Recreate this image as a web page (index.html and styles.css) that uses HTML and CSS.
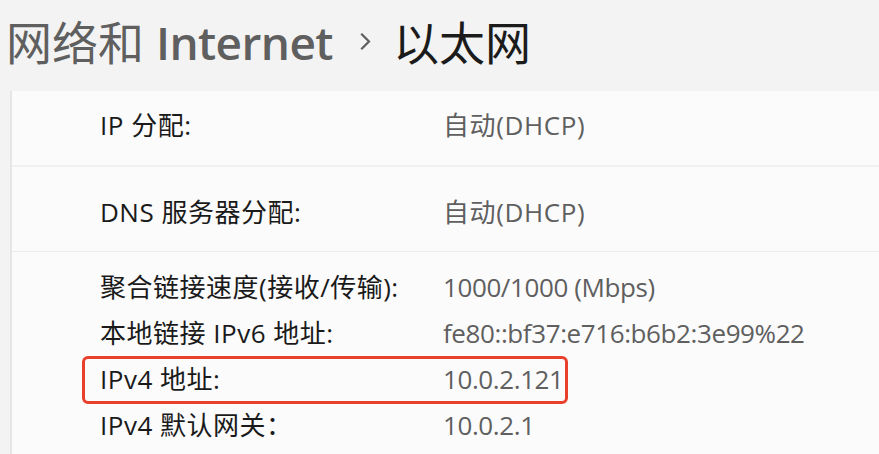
FILE: index.html
```html
<!DOCTYPE html>
<html lang="zh-CN">
<head>
<meta charset="utf-8">
<title>以太网</title>
<link rel="stylesheet" href="styles.css">
</head>
<body>
<header class="crumbs">
  <span class="crumb-parent"><span class="cjk">网络和</span> <span class="latin-strong">Internet</span></span>
  <svg class="chev" width="12" height="18" viewBox="0 0 12 18" aria-hidden="true"><polyline points="2,1.5 9,8.5 2,15.5" fill="none" stroke="#5f5f5f" stroke-width="2.2" stroke-linecap="square" stroke-linejoin="miter"/></svg>
  <span class="crumb-current">以太网</span>
</header>
<main class="card">
  <section class="group g1">
    <div class="row"><span class="label">IP 分配:</span><span class="value wide">自动(DHCP)</span></div>
  </section>
  <section class="group g2">
    <div class="row"><span class="label">DNS 服务器分配:</span><span class="value wide">自动(DHCP)</span></div>
  </section>
  <section class="group g3">
    <div class="row"><span class="label">聚合链接速度(接收/传输):</span><span class="value">1000/1000 (Mbps)</span></div>
    <div class="row"><span class="label">本地链接 IPv6 地址:</span><span class="value">fe80::bf37:e716:b6b2:3e99%22</span></div>
    <div class="row marked"><span class="label">IPv4 地址:</span><span class="value">10.0.2.121</span><span class="highlight"></span></div>
    <div class="row"><span class="label">IPv4 默认网关：</span><span class="value">10.0.2.1</span></div>
  </section>
</main>
</body>
</html>
```

FILE: styles.css
```css
html, body {
  margin: 0;
  padding: 0;
  background: #f3f3f3;
  overflow: hidden;
  height: 454px;
}
body {
  font-family: "Open Sans", "Noto Sans CJK SC", sans-serif;
}
.crumbs {
  display: flex;
  align-items: center;
  height: 91px;
  box-sizing: border-box;
  padding: 0 0 8px 6px;
  font-size: 46px;
  line-height: 60px;
  white-space: nowrap;
}
.crumb-parent {
  color: #5f5f5f;
}
.latin-strong {
  font-weight: 600;
  letter-spacing: -0.6px;
}
.chev {
  margin: 0 21px 0 27px;
  flex: none;
}
.crumb-current {
  color: #1b1b1b;
}
.card {
  margin-left: 10px;
  border-left: 2px solid #e6e6e6;
  background: #fbfbfb;
  min-height: 380px;
}
.group {
  padding-left: 88px;
}
.g1 {
  height: 76px;
  box-sizing: border-box;
  padding-top: 11px;
  border-bottom: 2px solid #f0f0f0;
}
.g2 {
  height: 85px;
  box-sizing: border-box;
  padding-top: 22px;
  border-bottom: 1px solid #ebebeb;
}
.g3 {
  padding-top: 12px;
}
.row {
  display: grid;
  grid-template-columns: 343px auto;
  font-size: 26px;
  line-height: 46px;
  height: 46px;
  white-space: nowrap;
}
.label {
  color: #1a1a1a;
  letter-spacing: 0.5px;
}
.value {
  color: #5f5f5f;
  letter-spacing: -0.4px;
}
.value.wide {
  letter-spacing: 0.6px;
}
.marked {
  position: relative;
}
.highlight {
  position: absolute;
  left: -18px;
  top: 0;
  width: 486px;
  height: 48px;
  box-sizing: border-box;
  border: 3px solid #e8402a;
  border-radius: 6px;
}
```
